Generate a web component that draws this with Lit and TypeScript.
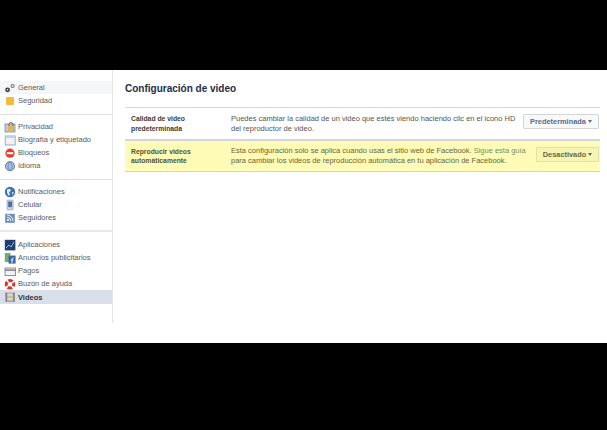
import { LitElement, html, css, svg } from "lit";
import { customElement } from "lit/decorators.js";

const icons: Record<string, unknown> = {
  general: svg`<circle cx="3.6" cy="7.8" r="1.6" fill="none" stroke="#3f3f3f" stroke-width="1.6"/><circle cx="8.6" cy="4" r="1.5" fill="none" stroke="#777" stroke-width="1.2"/>`,
  seguridad: svg`<rect x="2" y="2" width="8" height="8" rx="1" fill="#f5b93c"/>`,
  privacidad: svg`<rect x="1" y="3" width="10" height="8" fill="#b9cbe4" stroke="#6f8fbd" stroke-width=".8"/><rect x="4" y="5" width="6" height="5" fill="#e5b24e"/><path d="M5 5V3.6a2 2 0 0 1 4 0V5" fill="none" stroke="#7a5b20"/>`,
  biografia: svg`<rect x="1.2" y="2" width="10" height="9" fill="#eef2f8" stroke="#8ea5c6" stroke-width=".9"/><rect x="1.2" y="2" width="10" height="2" fill="#c2cfe2"/>`,
  bloqueos: svg`<circle cx="6" cy="6.2" r="4.6" fill="#e2402f"/><rect x="2.8" y="5.2" width="6.4" height="2" fill="#fff"/>`,
  idioma: svg`<circle cx="6" cy="6.2" r="4.6" fill="#a9bddd" stroke="#5f7fb5"/><ellipse cx="6" cy="6.2" rx="2" ry="4" fill="none" stroke="#5f7fb5" stroke-width=".7"/>`,
  notificaciones: svg`<circle cx="6" cy="6" r="5.2" fill="#3f6fb5"/><path d="M3 3.5l3-.8 1 2-2 1.5 1 2.5-1.5 1-1.5-3zM8 6l2 .5-1.5 2.5z" fill="#e4ebf5"/>`,
  celular: svg`<rect x="3" y="1" width="6.2" height="10" rx=".8" fill="#c7d2e3" stroke="#8b9dbb" stroke-width=".6"/><rect x="4.2" y="2.5" width="3.8" height="5.6" fill="#4b6ea6"/>`,
  seguidores: svg`<rect x="1.2" y="1.8" width="9.6" height="9" fill="#6d8cc0"/><circle cx="4" cy="8" r="1" fill="#fff"/><path d="M3 5.2a3.8 3.8 0 0 1 3.8 3.8M3 3a6 6 0 0 1 6 6" fill="none" stroke="#fff" stroke-width=".9"/>`,
  aplicaciones: svg`<rect x="0.8" y="0.8" width="10.6" height="10.6" fill="#22406f"/><path d="M2 9l3-3 2 2 3-5" fill="none" stroke="#8fb5de" stroke-width="1"/>`,
  anuncios: svg`<rect x="0.8" y="1" width="5.6" height="9" fill="#6fb06a"/><rect x="4.6" y="3.6" width="7" height="8" fill="#3b63a8"/><path d="M8 11V7.4c0-1 .5-1.4 1.6-1.4M7 8h2.4" fill="none" stroke="#fff" stroke-width=".9"/>`,
  pagos: svg`<rect x="1" y="3" width="10.4" height="7.6" fill="#f2f2f2" stroke="#777" stroke-width=".8"/><rect x="1" y="4.4" width="10.4" height="1.4" fill="#777"/>`,
  buzon: svg`<circle cx="6" cy="6.2" r="3.8" fill="none" stroke="#d8322a" stroke-width="3"/><circle cx="6" cy="6.2" r="3.8" fill="none" stroke="#fff" stroke-width="3" stroke-dasharray="1.6 4.37" stroke-dashoffset="-2.2"/>`,
  videos: svg`<rect x="1.2" y="1.5" width="9.8" height="9.5" fill="#a9a39b"/><rect x="3.4" y="2.5" width="5.4" height="3" fill="#d9d6d2"/><rect x="3.4" y="6.5" width="5.4" height="3" fill="#d9d6d2"/><path d="M2.3 2v8.5M9.9 2v8.5" stroke="#6d665e" stroke-width="1.2" stroke-dasharray="1 .8"/>`,
};

type Item = [string, string, string?];
const groups: Item[][] = [
  [["general", "General", "hover"], ["seguridad", "Seguridad"]],
  [["privacidad", "Privacidad"], ["biografia", "Biografía y etiquetado"], ["bloqueos", "Bloqueos"], ["idioma", "Idioma"]],
  [["notificaciones", "Notificaciones"], ["celular", "Celular"], ["seguidores", "Seguidores"]],
  [["aplicaciones", "Aplicaciones"], ["anuncios", "Anuncios publicitarios"], ["pagos", "Pagos"], ["buzon", "Buzón de ayuda"], ["videos", "Videos", "active"]],
];

@customElement("app-root")
export class AppRoot extends LitElement {
  static styles = css`
    :host { display: block; width: 607px; height: 430px; overflow: hidden; background: #000; padding: 70px 0 87px; box-sizing: border-box; font-family: "Liberation Sans", Arial, sans-serif; font-size: 7.5px; color: #444; }
    .page { display: flex; height: 273px; background: #fff; }
    .side { width: 112px; height: 242px; border-right: 1px solid #e6e6e6; padding-top: 11px; box-sizing: content-box; flex: none; display: flex; flex-direction: column; }
    .group { display: flex; flex-direction: column; padding-bottom: 7px; margin-bottom: 5px; border-bottom: 1px solid #dfdfdf; }
    .group:nth-child(3) { margin-bottom: 6px; border-bottom-width: 2px; border-bottom-color: #e9e9e9; padding-bottom: 6px; }
    .group:last-child { border-bottom: 0; }
    .item { display: flex; align-items: center; gap: 2px; height: 13px; padding-left: 4px; color: #5a5a5a; }
    .item svg { width: 12px; height: 12px; flex: none; }
    .item.hover { background: #f5f6f7; }
    .item.active { background: #d8dfea; color: #333; font-weight: 700; height: 14px; }
    .main { flex: 1; padding: 12px 7px 0 12px; min-width: 0; }
    h1 { margin: 0 0 11px; font-size: 10px; line-height: 14px; color: #1e2d4a; font-weight: 700; }
    .row { display: flex; align-items: center; height: 31px; border-top: 1px solid #d3d6db; }
    .row.warn { height: 33px; background: #fdfbb6; border-top: 2px solid #d3d6db; border-bottom: 1px solid #d6d6ba; box-sizing: border-box; }
    .label { width: 106px; padding-left: 6px; box-sizing: border-box; flex: none; font-weight: 700; font-size: 6.8px; line-height: 9.5px; color: #3a3a3a; }
    .warn .label { color: #55552a; }
    .desc { flex: 1; line-height: 10px; color: #555; white-space: nowrap; min-width: 0; }
    .warn .desc { color: #66663a; }
    .link { color: #7f8f5f; }
    .btn { flex: none; display: flex; align-items: center; justify-content: center; gap: 2px; height: 15px; margin: 0 1px 4px 0; box-sizing: border-box; border: 1px solid #d4d5d8; background: #f8f9fa; color: #5b6b85; font-weight: 700; font-size: 7.4px; border-radius: 1px; }
    .btn.a { width: 76px; }
    .btn.b { width: 63px; background: #f7f5b4; border-color: #e2e0a6; color: #6a6a3a; }
    .caret { width: 0; height: 0; border: 2.5px solid transparent; border-top: 3.5px solid currentColor; border-bottom: 0; }
  `;

  render() {
    return html`
      <div class="page">
        <nav class="side">
          ${groups.map((g) => html`<div class="group">
            ${g.map(([ic, t, c]) => html`<div class="item ${c ?? ""}">
              <svg viewBox="0 0 12 12">${icons[ic]}</svg><span>${t}</span>
            </div>`)}
          </div>`)}
        </nav>
        <section class="main">
          <h1>Configuración de video</h1>
          <div class="row">
            <div class="label">Calidad de video<br />predeterminada</div>
            <div class="desc">Puedes cambiar la calidad de un video que estés viendo haciendo clic en el icono HD<br />del reproductor de video.</div>
            <div class="btn a">Predeterminada <span class="caret"></span></div>
          </div>
          <div class="row warn">
            <div class="label">Reproducir videos<br />automáticamente</div>
            <div class="desc">Esta configuración solo se aplica cuando usas el sitio web de Facebook. <span class="link">Sigue esta guía</span><br />para cambiar los videos de reproducción automática en tu aplicación de Facebook.</div>
            <div class="btn b">Desactivado <span class="caret"></span></div>
          </div>
        </section>
      </div>
    `;
  }
}
